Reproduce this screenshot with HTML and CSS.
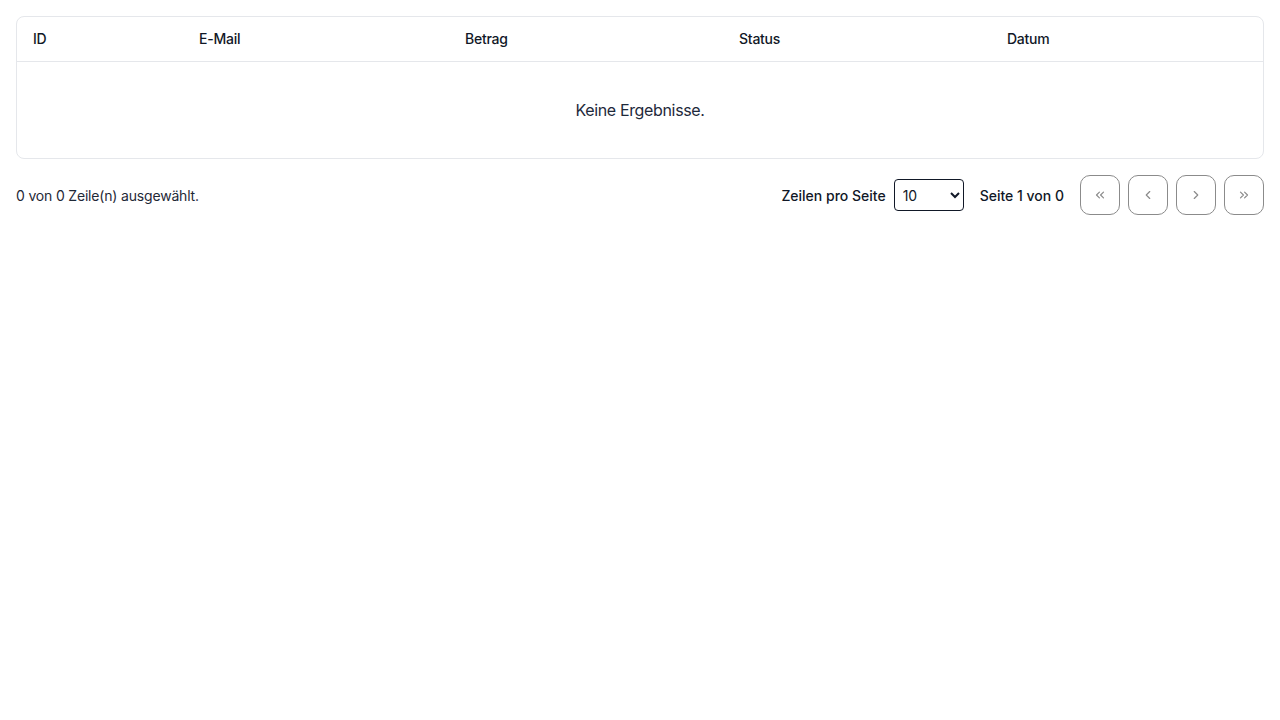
FILE: index.html
```html
<!DOCTYPE html>
<html lang="de">
<head>
<meta charset="utf-8">
<title>Zahlungen</title>
<link rel="stylesheet" href="styles.css">
</head>
<body>
<div class="page">
  <div class="table-card">
    <table class="data-table">
      <thead>
        <tr>
          <th class="col-id">ID</th>
          <th class="col-email">E-Mail</th>
          <th class="col-amount">Betrag</th>
          <th class="col-status">Status</th>
          <th class="col-date">Datum</th>
        </tr>
      </thead>
      <tbody>
        <tr>
          <td class="empty" colspan="5">Keine Ergebnisse.</td>
        </tr>
      </tbody>
    </table>
  </div>
  <div class="footer">
    <div class="selection">0 von 0 Zeile(n) ausgewählt.</div>
    <div class="controls">
      <div class="rows-per-page">
        <span class="label">Zeilen pro Seite</span>
        <select class="page-size">
          <option>10</option>
          <option>20</option>
          <option>30</option>
        </select>
      </div>
      <div class="page-info">Seite 1 von 0</div>
      <div class="pager">
        <button class="pager-btn" disabled aria-label="Erste Seite">
          <svg viewBox="0 0 24 24" width="16" height="16" fill="none" stroke="currentColor" stroke-width="2" stroke-linecap="round" stroke-linejoin="round"><path d="m11 17-5-5 5-5"/><path d="m18 17-5-5 5-5"/></svg>
        </button>
        <button class="pager-btn" disabled aria-label="Vorherige Seite">
          <svg viewBox="0 0 24 24" width="16" height="16" fill="none" stroke="currentColor" stroke-width="2" stroke-linecap="round" stroke-linejoin="round"><path d="m15 18-6-6 6-6"/></svg>
        </button>
        <button class="pager-btn" disabled aria-label="Nächste Seite">
          <svg viewBox="0 0 24 24" width="16" height="16" fill="none" stroke="currentColor" stroke-width="2" stroke-linecap="round" stroke-linejoin="round"><path d="m9 18 6-6-6-6"/></svg>
        </button>
        <button class="pager-btn" disabled aria-label="Letzte Seite">
          <svg viewBox="0 0 24 24" width="16" height="16" fill="none" stroke="currentColor" stroke-width="2" stroke-linecap="round" stroke-linejoin="round"><path d="m6 17 5-5-5-5"/><path d="m13 17 5-5-5-5"/></svg>
        </button>
      </div>
    </div>
  </div>
</div>
</body>
</html>
```
FILE: styles.css
```css
* { box-sizing: border-box; }
html, body {
  margin: 0;
  padding: 0;
  background: #ffffff;
  font-family: Inter, "Noto Sans", "Liberation Sans", sans-serif;
  color: #0f172a;
}
.page {
  padding: 16px;
  display: flex;
  flex-direction: column;
  gap: 16px;
}
.table-card {
  border: 1px solid #e5e7eb;
  border-radius: 8px;
  overflow: hidden;
}
.data-table {
  width: 100%;
  border-collapse: collapse;
  table-layout: fixed;
}
.data-table th {
  height: 44px;
  padding: 0 16px;
  text-align: left;
  font-size: 14px;
  font-weight: 500;
  letter-spacing: -0.25px;
  color: #111827;
  border-bottom: 1px solid #e5e7eb;
}
.col-id { width: 166px; }
.col-email { width: 266px; }
.col-amount { width: 274px; }
.col-status { width: 268px; }
.col-date { width: auto; }
.data-table td.empty {
  height: 97px;
  padding-top: 1px;
  text-align: center;
  font-size: 16px;
  letter-spacing: -0.35px;
  color: #1e293b;
}
.footer {
  display: flex;
  align-items: center;
  justify-content: space-between;
  height: 40px;
}
.selection {
  font-size: 14px;
  letter-spacing: -0.18px;
  color: #1f2937;
}
.controls {
  display: flex;
  align-items: center;
  gap: 16px;
}
.rows-per-page {
  display: flex;
  align-items: center;
  gap: 8px;
}
.label, .page-info {
  font-size: 14px;
  font-weight: 500;
  color: #111827;
}
.page-size {
  width: 70px;
  height: 32px;
  border: 1px solid #111827;
  border-radius: 4px;
  background: #fff;
  font-family: Inter, "Noto Sans", "Liberation Sans", sans-serif;
  font-size: 14px;
  color: #111827;
  padding: 0 4px;
}
.pager {
  display: flex;
  gap: 8px;
}
.pager-btn {
  width: 40px;
  height: 40px;
  border: 1px solid #8b8b8b;
  border-radius: 10px;
  background: #fff;
  color: #8b8b8b;
  display: flex;
  align-items: center;
  justify-content: center;
  padding: 0;
}
.pager-btn svg { width: 14px; height: 14px; }
```
